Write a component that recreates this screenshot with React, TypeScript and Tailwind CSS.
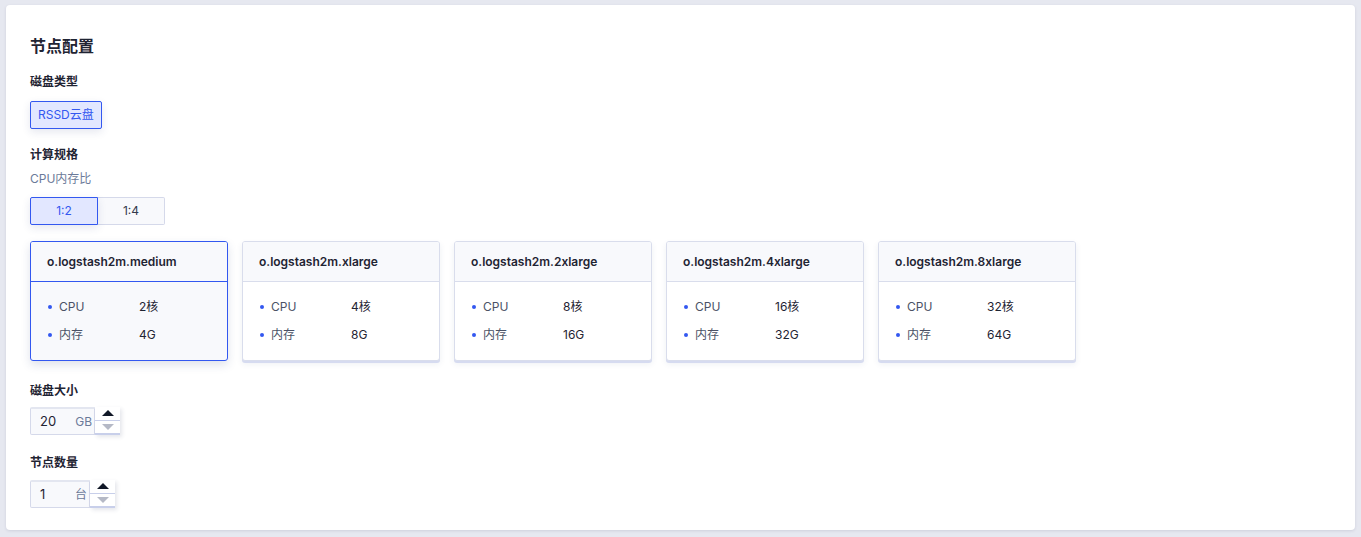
import React from "react";

const specs = [
  { name: "o.logstash2m.medium", cpu: "2核", mem: "4G" },
  { name: "o.logstash2m.xlarge", cpu: "4核", mem: "8G" },
  { name: "o.logstash2m.2xlarge", cpu: "8核", mem: "16G" },
  { name: "o.logstash2m.4xlarge", cpu: "16核", mem: "32G" },
  { name: "o.logstash2m.8xlarge", cpu: "32核", mem: "64G" },
];

const Label = ({ children }: { children: React.ReactNode }) => (
  <div className="text-[12px] font-bold leading-[18px] text-[#1f2433]">{children}</div>
);

const NumberInput = ({ value, unit, width }: { value: string; unit: string; width: string }) => (
  <div className="flex items-stretch h-[28px]">
    <div
      className={`${width} flex items-center justify-between pl-[9px] pr-[2px] bg-[#f8f9fc] border border-[#d5d9ea] border-t-2 border-t-[#e3e6f0] rounded-l-[2px]`}
    >
      <span className="text-[13px] text-[#1f2433]">{value}</span>
      <span className="text-[12px] text-[#6b7a99]">{unit}</span>
    </div>
    <div className="w-[25px] flex flex-col bg-white shadow-[2px_2px_4px_rgba(40,50,90,0.12)]">
      <div className="flex-1 flex items-center justify-center border-b border-[#c8cfea]">
        <svg width="12" height="6" viewBox="0 0 12 6">
          <path d="M0 6 L6 0 L12 6 Z" fill="#111827" />
        </svg>
      </div>
      <div className="flex-1 flex items-center justify-center border-b-2 border-[#c8cfea]">
        <svg width="12" height="6" viewBox="0 0 12 6">
          <path d="M0 0 L6 6 L12 0 Z" fill="#b5b9c6" />
        </svg>
      </div>
    </div>
  </div>
);

export default function App() {
  return (
    <div
      className="w-[1361px] h-[537px] bg-[#e6e8f0] pt-[5px] pl-[6px] pr-[6px]"
      style={{ fontFamily: 'Inter, "Noto Sans CJK SC", sans-serif' }}
    >
      <div className="h-[525px] bg-white rounded-[4px] shadow-[0_1px_3px_rgba(30,40,80,0.12)] pl-[24px] pt-[29px]">
        <div className="text-[16px] font-bold leading-[24px] text-[#1f2433]">节点配置</div>

        <div className="mt-[15px]">
          <Label>磁盘类型</Label>
          <div className="mt-[10px]">
            <button className="h-[28px] px-[7px] text-[12px] text-[#3358f0] bg-[#e2e7ff] border border-[#3358f0] rounded-[2px] shadow-[0_3px_8px_rgba(40,60,120,0.12)]">
              RSSD云盘
            </button>
          </div>
        </div>

        <div className="mt-[17px]">
          <Label>计算规格</Label>
          <div className="mt-[6px] text-[12px] leading-[18px] text-[#6b7a99]">CPU内存比</div>
          <div className="mt-[9px] flex">
            <button className="w-[68px] h-[28px] text-[12px] text-[#3358f0] bg-[#e2e7ff] border border-[#3358f0] rounded-l-[2px] shadow-[0_3px_8px_rgba(40,60,120,0.12)] relative z-10">
              1:2
            </button>
            <button className="w-[67px] h-[28px] text-[12px] text-[#333a4d] bg-[#f8f9fc] border border-l-0 border-[#d5d9ea] rounded-r-[2px]">
              1:4
            </button>
          </div>
          <div className="mt-[16px] flex gap-[14px]">
            {specs.map((s, i) => {
              const active = i === 0;
              return (
                <div
                  key={s.name}
                  className={`w-[198px] h-[120px] rounded-[3px] border overflow-hidden ${
                    active
                      ? "border-[#3358f0] bg-[#f8f9fc] shadow-[0_4px_10px_rgba(40,60,120,0.15)]"
                      : "border-[#d9ddec] bg-white shadow-[0_2px_0_#d6dbf0,0_3px_6px_rgba(40,60,120,0.08)]"
                  }`}
                >
                  <div
                    className={`h-[40px] flex items-center pl-[16px] bg-[#f8f9fc] border-b ${
                      active ? "border-[#3358f0]" : "border-[#d9ddec]"
                    }`}
                  >
                    <span className="text-[12px] font-semibold text-[#1f2433]">{s.name}</span>
                  </div>
                  <div className="pt-[16px] pl-[17px] flex flex-col gap-[10px]">
                    {[
                      ["CPU", s.cpu],
                      ["内存", s.mem],
                    ].map(([k, v]) => (
                      <div key={k} className="flex items-center h-[18px] text-[12px]">
                        <span className="w-[4px] h-[4px] rounded-full bg-[#3358f0]" />
                        <span className="ml-[7px] w-[80px] text-[#4b5266]">{k}</span>
                        <span className="text-[#1f2433]">{v}</span>
                      </div>
                    ))}
                  </div>
                </div>
              );
            })}
          </div>
        </div>

        <div className="mt-[21px]">
          <Label>磁盘大小</Label>
          <div className="mt-[7px]">
            <NumberInput value="20" unit="GB" width="w-[65px]" />
          </div>
        </div>

        <div className="mt-[19px]">
          <Label>节点数量</Label>
          <div className="mt-[8px]">
            <NumberInput value="1" unit="台" width="w-[60px]" />
          </div>
        </div>
      </div>
    </div>
  );
}
